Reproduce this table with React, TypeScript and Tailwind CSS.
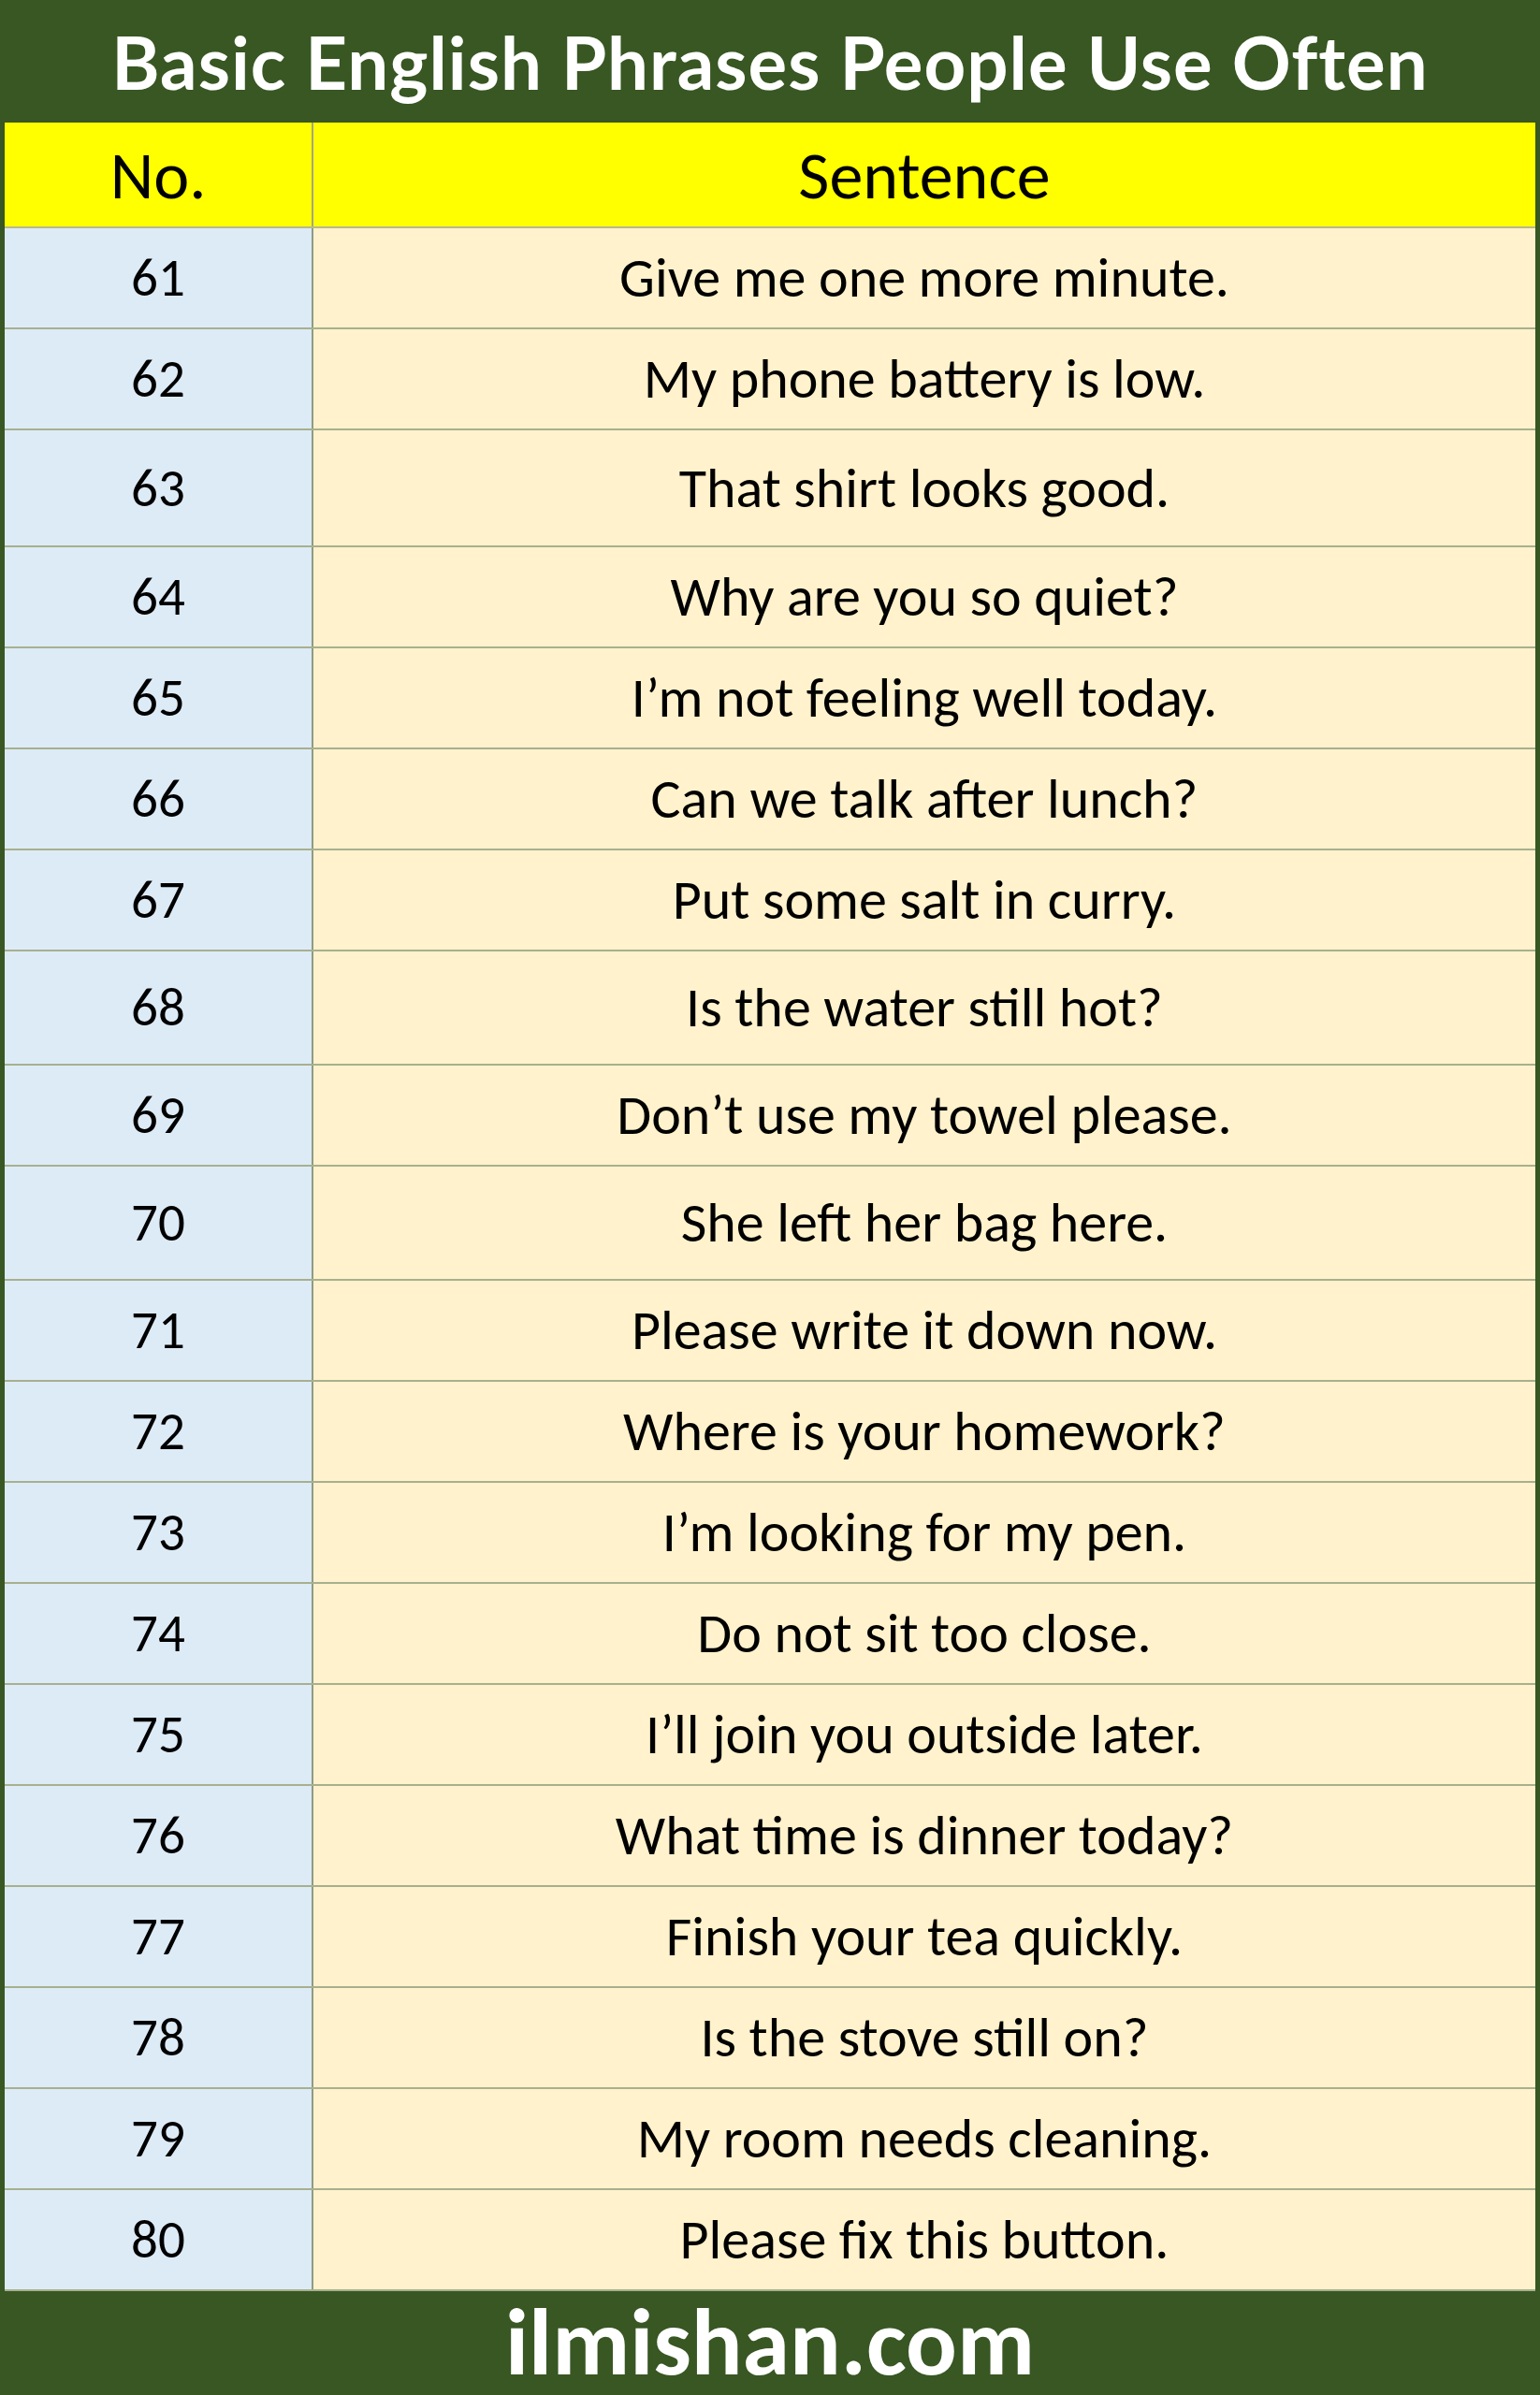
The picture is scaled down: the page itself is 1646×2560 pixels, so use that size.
const rows: [number, string, string][] = [
  [61, 'Give me one more minute.', 'h-[108px]'],
  [62, 'My phone battery is low.', 'h-[108px]'],
  [63, 'That shirt looks good.', 'h-[125px]'],
  [64, 'Why are you so quiet?', 'h-[108px]'],
  [65, 'I’m not feeling well today.', 'h-[108px]'],
  [66, 'Can we talk after lunch?', 'h-[108px]'],
  [67, 'Put some salt in curry.', 'h-[108px]'],
  [68, 'Is the water still hot?', 'h-[122px]'],
  [69, 'Don’t use my towel please.', 'h-[108px]'],
  [70, 'She left her bag here.', 'h-[122px]'],
  [71, 'Please write it down now.', 'h-[108px]'],
  [72, 'Where is your homework?', 'h-[108px]'],
  [73, 'I’m looking for my pen.', 'h-[108px]'],
  [74, 'Do not sit too close.', 'h-[108px]'],
  [75, 'I’ll join you outside later.', 'h-[108px]'],
  [76, 'What time is dinner today?', 'h-[108px]'],
  [77, 'Finish your tea quickly.', 'h-[108px]'],
  [78, 'Is the stove still on?', 'h-[108px]'],
  [79, 'My room needs cleaning.', 'h-[108px]'],
  [80, 'Please fix this button.', 'h-[108px]'],
]

export default function App() {
  return (
    <div className="w-[1646px] h-[2560px] bg-[#385723] flex flex-col font-['Calibri','Carlito','Lato',sans-serif]">
      {/* Title */}
      <div className="h-[131px] flex items-center justify-center">
        <h1 className="text-white text-[78px] font-bold tracking-[1px] leading-[110px] font-['Comic_Sans_MS','Lato',sans-serif]">
          Basic English Phrases People Use Often
        </h1>
      </div>

      {/* Table */}
      <div className="mx-[5px] flex flex-col text-black">
        <div className="h-[113px] grid grid-cols-[330px_1fr] bg-[#ffff00] border-b-2 border-[#b9b98a] text-[72px] leading-[90px]">
          <div className="flex items-center justify-center border-r-2 border-[#a3a87a]">No.</div>
          <div className="flex items-center justify-center">Sentence</div>
        </div>
        {rows.map(([n, text, h]) => (
          <div key={n} className={`${h} grid grid-cols-[330px_1fr] border-b-2 border-[#a7b08e] text-[60px] leading-[80px]`}>
            <div className="bg-[#ddebf7] flex items-center justify-center border-r-2 border-[#8d9b86] text-[57px]">{n}</div>
            <div className="bg-[#fff2cc] flex items-center justify-center">{text}</div>
          </div>
        ))}
      </div>

      {/* Footer */}
      <div className="h-[111px] flex items-center justify-center pb-[4px]">
        <span className="text-white text-[102px] font-bold leading-[100px]">ilmishan.com</span>
      </div>
    </div>
  )
}
